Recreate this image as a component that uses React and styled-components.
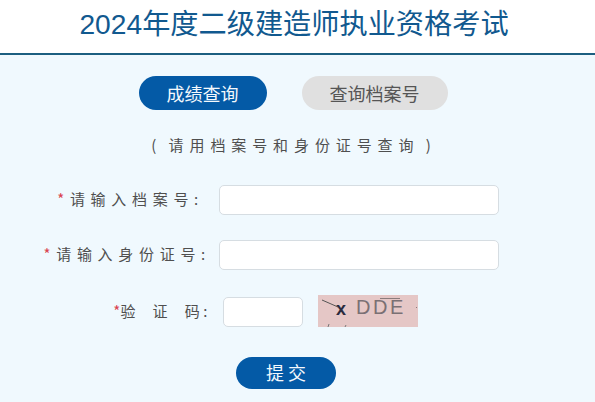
import React from "react";
import styled, { createGlobalStyle } from "styled-components";

const Global = createGlobalStyle`
  html, body {
    margin: 0;
    padding: 0;
    height: 100%;
    overflow: hidden;
    background: #f0f9fe;
  }
  * { box-sizing: border-box; }
  body {
    font-family: "Noto Sans CJK SC", "Liberation Sans", sans-serif;
  }
`;

const Header = styled.header`
  height: 55px;
  padding-right: 7px;
  background: #fff;
  border-bottom: 2px solid #1c5f80;
  display: flex;
  justify-content: center;
  align-items: flex-start;
`;

const Title = styled.h1`
  margin: 0;
  font-family: "Liberation Sans", "Noto Sans CJK SC", sans-serif;
  font-weight: 400;
  font-size: 28.2px;
  line-height: 48px;
  color: #11598f;
  white-space: nowrap;
`;

const Main = styled.main`
  display: flex;
  flex-direction: column;
  align-items: center;
  padding: 21px 7px 0 0;
`;

const Tabs = styled.div`
  display: flex;
  gap: 35px;
  margin-right: 2px;
`;

const Tab = styled.button`
  height: 34px;
  width: ${({ $active }) => ($active ? "128px" : "146px")};
  border: 0;
  padding: 0;
  border-radius: 17px;
  font-family: inherit;
  font-size: 18px;
  background: ${({ $active }) => ($active ? "#045aa6" : "#e0e0e0")};
  color: ${({ $active }) => ($active ? "#f4f9fd" : "#555")};
`;

const Hint = styled.p`
  margin: 23px 0 0;
  font-size: 15px;
  line-height: 24px;
  letter-spacing: 5.9px;
  word-spacing: -3px;
  color: #4f4f4f;
  white-space: pre;
`;

const Form = styled.form`
  display: flex;
  flex-direction: column;
  align-items: flex-start;
  width: 100%;
  margin-top: 28px;
`;

const Row = styled.div`
  display: flex;
  align-items: center;
  height: 30px;
  margin-bottom: ${({ $gap }) => $gap}px;
`;

const Label = styled.label`
  width: ${({ $width }) => $width}px;
  text-align: right;
  font-size: 15px;
  line-height: 28px;
  letter-spacing: ${({ $spacing }) => $spacing}px;
  color: #4f4f4f;
  white-space: pre;
  align-self: flex-start;
`;

const Star = styled.span`
  color: #d9434f;
  letter-spacing: ${({ $spacing }) => $spacing ?? 5.7}px;
`;

const Input = styled.input`
  display: block;
  width: ${({ $width }) => $width}px;
  height: 30px;
  margin-left: ${({ $offset }) => $offset}px;
  background: #fff;
  border: 1px solid #d6dde2;
  border-radius: 5px;
  outline: none;
`;

const Captcha = styled.svg`
  display: block;
  width: 100px;
  height: 32px;
  margin: 0 0 2px 15px;
`;

const Submit = styled.button`
  align-self: center;
  width: 100px;
  height: 32px;
  margin: 5px 16px 0 0;
  border: 0;
  padding: 0 0 2px 4px;
  border-radius: 16px;
  background: #045aa6;
  color: #f4f9fd;
  font-family: inherit;
  font-size: 18px;
  letter-spacing: 4px;
`;

const App = () => (
  <>
    <Global />
    <Header>
      <Title>2024年度二级建造师执业资格考试</Title>
    </Header>
    <Main>
      <Tabs>
        <Tab type="button" $active>成绩查询</Tab>
        <Tab type="button">查询档案号</Tab>
      </Tabs>
      <Hint>( 请用档案号和身份证号查询 )</Hint>
      <Form onSubmit={(e) => e.preventDefault()}>
        <Row $gap={25}>
          <Label $width={204} $spacing={5.7}><Star>*</Star>请输入档案号:</Label>
          <Input $width={280} $offset={15} />
        </Row>
        <Row $gap={27}>
          <Label $width={211} $spacing={5.7}><Star>*</Star>请输入身份证号:</Label>
          <Input $width={280} $offset={8} />
        </Row>
        <Row $gap={25}>
          <Label $width={211} $spacing={3.5}><Star $spacing={0}>*</Star>验  证  码:</Label>
          <Input $width={80} $offset={12} />
          <Captcha viewBox="0 0 100 32">
            <rect width="100" height="32" fill="#e5c7c6" />
            <path d="M4 5 L20 12" stroke="#555" strokeWidth="1" />
            <text x="18" y="20" fontFamily="Liberation Sans" fontSize="18" fontWeight="700" fill="#2b2b3e">x</text>
            <text x="38" y="19" fontFamily="Liberation Sans" fontSize="20" fill="#7a7074" letterSpacing="2.5">DDE</text>
            <path d="M62 3.5 H82" stroke="#8a7c7c" strokeWidth="1" />
            <path d="M10 32 L11 29 M27 32 L28 30" stroke="#777" strokeWidth="1" />
            <rect x="98" y="12" width="1" height="1" fill="#8a7c7c" />
          </Captcha>
        </Row>
        <Submit type="submit">提交</Submit>
      </Form>
    </Main>
  </>
);

export default App;
